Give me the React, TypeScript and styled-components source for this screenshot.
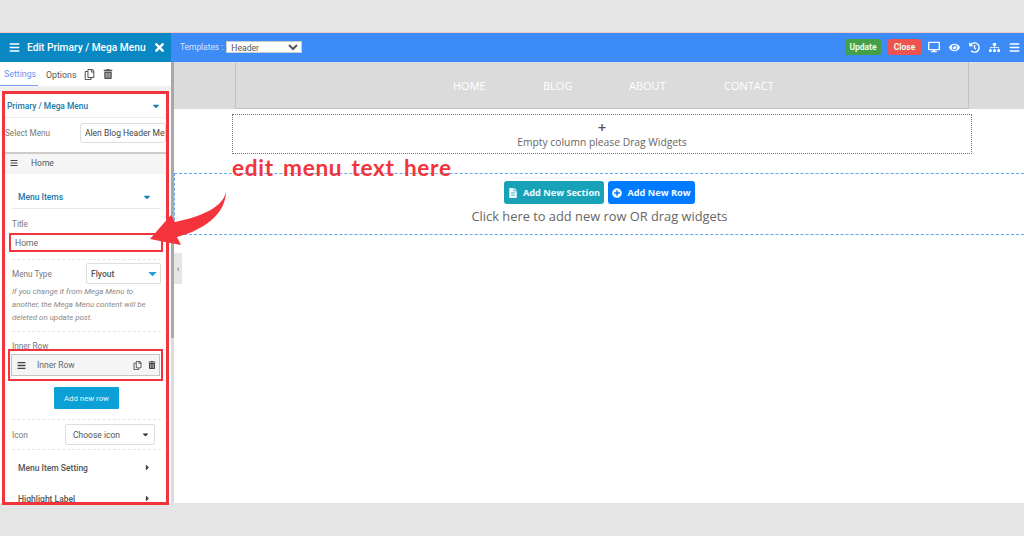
import React from "react";
import styled, { createGlobalStyle } from "styled-components";
import {
  FaBars, FaTimes, FaRegCopy, FaTrashAlt, FaDesktop, FaEye, FaHistory, FaSitemap, FaFileAlt, FaPlusCircle,
  FaCaretDown, FaCaretRight,
} from "react-icons/fa";

const Global = createGlobalStyle`
  html, body { margin: 0; padding: 0; background: #e5e5e5; }
  * { box-sizing: border-box; }
  body { font-family: Roboto, "Liberation Sans", sans-serif; }
`;

const Page = styled.div`
  width: 1024px; height: 536px; padding-top: 33px; background: #e5e5e5; overflow: hidden; position: relative;
`;
const Frame = styled.div`
  display: flex; height: 471px; background: #fff; border-top: 1px solid #f3c9c9;
  margin-top: -1px;
`;
const Sidebar = styled.aside`
  width: 171px; flex: none; display: flex; flex-direction: column; background: #fff;
`;
const SideHead = styled.header`
  height: 29px; flex: none; background: #0a88c4; color: #fff; display: flex; align-items: center;
  padding: 0 6px 0 9px; font-size: 10.2px; font-weight: 500; gap: 7px;
  white-space: nowrap;
  svg { flex: none; }
`;
const SideTitle = styled.span`flex: 1;`;
const Tabs = styled.div`
  height: 24px; flex: none; display: flex; align-items: center; font-size: 8.8px; color: #555; gap: 8px;
`;
const Tab = styled.span<{ $active?: boolean }>`
  height: 24px; display: flex; align-items: center; padding: 1px 0 0 ${p => (p.$active ? "4px" : "0")};
  width: ${p => (p.$active ? "38px" : "auto")};
  color: ${p => (p.$active ? "#6f93f5" : "#555")};
  border-bottom: ${p => (p.$active ? "1px solid #7fa2f5" : "none")};
`;
const TabIcon = styled.span`
  display: flex; color: #555;
`;
const TabGap = styled.div`height: 5px; flex: none; background: #f0f0f0;`;
const Panel = styled.section`
  margin-left: 2px; width: 167px; height: 414px; flex: none; border: 3px solid #f2343c; overflow: hidden;
  background: #fff; position: relative; z-index: 2;
`;
const PanelHead = styled.div`
  height: 24px; display: flex; align-items: center; justify-content: space-between; padding: 0 5px 0 2px;
  color: #2177a8; font-size: 8.4px; font-weight: 500; border-bottom: 1px solid #eee;
  svg { color: #1a78b5; }
`;
const SelectRow = styled.div`
  height: 29px; padding-top: 1px; display: flex; align-items: center; justify-content: space-between; font-size: 8.2px; color: #777;
  margin-bottom: 5px;
`;
const MenuInput = styled.input`
  width: 86px; height: 20px; border: 1px solid #ddd; border-radius: 3px; outline: 0;
  font: 8.5px Roboto, sans-serif; color: #444; padding: 0 0 0 4px; background: #fff;
`;
const ItemHead = styled.div`
  height: 22px; display: flex; align-items: center; gap: 13px; padding: 0 0 3px 5px; background: #f5f5f5;
  border-top: 2px solid #ccc; font-size: 8.5px; color: #555;
  svg { color: #444; }
`;
const Body = styled.div`
  padding: 11px 0 0 7px; width: 156px;
`;
const Collapse = styled.div`
  height: 24px; display: flex; align-items: center; justify-content: space-between; padding: 0 9px 0 6px;
  font-size: 8.5px; font-weight: 500; color: #2177a8; border-bottom: 1px solid #e8e8e8;
  svg { color: #1a78b5; }
`;
const Label = styled.div`
  height: 12px; line-height: 12px; font-size: 8.2px; color: #777; margin-top: 9px;
`;
const TitleInput = styled.div`
  margin: 3px -2px 0 -3px; height: 19px; border: 2px solid #f2343c; font-size: 8.6px; color: #666;
  display: flex; align-items: center; padding-left: 4px;
`;
const Dash = styled.div<{ $mt: number }>`
  border-top: 1px dashed #e6e6e6; margin-top: ${p => p.$mt}px;
`;
const FieldRow = styled.div<{ $mt: number }>`
  height: 21px; display: flex; align-items: center; justify-content: space-between; font-size: 8.2px; color: #777;
  margin-top: ${p => p.$mt}px;
`;
const Dropdown = styled.div`
  width: 75px; height: 21px; border: 1px solid #ddd; border-radius: 2px; display: flex; align-items: center;
  justify-content: space-between; padding: 0 1px 0 4px; font-size: 8.5px; font-weight: 500; color: #555;
  svg { color: #2b9be0; }
`;
const IconDropdown = styled(Dropdown)`
  width: 90px; margin-right: 6px; padding: 0 4px 0 7px; font-weight: 400; font-size: 8.5px;
  svg { color: #333; }
`;
const Help = styled.p`
  margin: 1px 0 0; font-size: 7.9px; line-height: 13px; font-style: italic; color: #8a8a8a; white-space: nowrap;
`;
const InnerLabel = styled(Label)`margin-top: 8px;`;
const RedBox = styled.div`
  margin: -3px -2px 0 -4px; height: 32px; border: 2px solid #f2343c; padding: 3px 1px;
`;
const InnerRow = styled.div`
  height: 22px; background: #f5f5f5; border: 1px solid #c4c4c4; display: flex; align-items: center;
  padding: 0 3px 0 5px; font-size: 8.5px; color: #666;
  svg { color: #444; flex: none; }
`;
const InnerName = styled.span`margin-left: 11px; flex: 1;`;
const InnerIcons = styled.span`display: flex; gap: 6px; align-items: center;`;
const Center = styled.div`display: flex; justify-content: center; margin-top: 6px;`;
const AddRow = styled.button`
  width: 65px; height: 22px; border: 0; border-radius: 1px; background: #0ca1d6; color: #e6f6fc; font: 400 7.8px Roboto, sans-serif; padding: 0;
`;
const Accordion = styled.div`
  height: 31px; display: flex; align-items: center; justify-content: space-between; padding: 0 9px 0 6px;
  font-size: 8.5px; font-weight: 500; color: #555;
  svg { color: #444; }
`;
const AccordionList = styled.div`margin-top: 2px;`;
const Track = styled.div`
  width: 3px; flex: none; background: #ddd; display: flex; flex-direction: column;
`;
const Thumb = styled.div`height: 305px; background: #a8a8a8;`;
const Main = styled.main`flex: 1; display: flex; flex-direction: column; min-width: 0; position: relative;`;
const TopBar = styled.div`
  height: 29px; flex: none; margin-left: -3px; background: #3d8bf7; display: flex; align-items: center; padding: 0 4px 1px 9px;
`;
const TemplateLabel = styled.label`font-size: 8.4px; color: #d4e5fd; margin-right: 3px; white-space: nowrap;`;
const TemplateSelect = styled.select`
  width: 76px; height: 12px; border: 1px solid #ccc; border-radius: 0; background: #fff; font: 8.6px Roboto, sans-serif; color: #555; padding: 0;
`;
const Spacer = styled.div`flex: 1;`;
const TopBtn = styled.button<{ $bg: string; $w: number; $ml: number }>`
  width: ${p => p.$w}px; height: 16px; border: 0; border-radius: 2px; background: ${p => p.$bg}; color: #eafbe9; padding: 0;
  margin-left: ${p => p.$ml}px; font: 700 8.5px Roboto, sans-serif;
`;
const TopIcons = styled.div`
  display: flex; align-items: center; gap: 9px; margin-left: 7px; color: #fff;
`;
const Band = styled.div`
  height: 47px; flex: none; background: #dbdbdb; padding: 0 55px 0 61px;
`;
const NavBox = styled.nav`
  height: 47px; border: 1px solid #c2c2c2; border-top: 0; position: relative; display: flex; align-items: center;
  padding-left: 217px; font: 11px "Open Sans", sans-serif; color: #fff;
`;
const NavItem = styled.span<{ $w: number }>`width: ${p => p.$w}px; flex: none;`;
const EmptyColumn = styled.div`
  margin: 5px 52px 0 58px; height: 40px; border: 1px dotted #777; display: flex; flex-direction: column; align-items: center;
  font: 10.3px "Open Sans", sans-serif; color: #666; padding-top: 5px;
`;
const Plus = styled.span`font-size: 15px; line-height: 15px; font-weight: 600; color: #555;`;
const EmptyText = styled.span`line-height: 15px;`;
const Section = styled.div`
  margin-top: 19px; height: 62px; border-top: 1px dashed #62a8ee; border-bottom: 1px dashed #62a8ee; border-left: 1px dashed #62a8ee;
  display: flex; flex-direction: column; align-items: center; padding-top: 7px;
`;
const BtnRow = styled.div`display: flex; gap: 4px;`;
const SectionBtn = styled.button<{ $bg: string; $w: number }>`
  width: ${p => p.$w}px; height: 23px; border: 0; border-radius: 3px; background: ${p => p.$bg}; color: #f1fbff;
  display: flex; align-items: center; justify-content: center; gap: 5px; padding: 0;
  font: 700 9.2px "Open Sans", sans-serif;
`;
const Hint = styled.div`
  font: 12.85px "Open Sans", sans-serif; color: #666; margin-top: 2px; line-height: 20px;
`;
const Handle = styled.div`
  position: absolute; left: 0; top: 220px; width: 8px; height: 31px; background: #e6e6e6; color: #666;
  font-size: 9px; display: flex; align-items: center; justify-content: center;
`;
const Note = styled.div`
  position: absolute; left: 232px; top: 154px; z-index: 4; white-space: nowrap; color: #f4343c;
  font: 700 22.6px/28px "Comic Sans MS", "Lato", "DejaVu Sans", sans-serif; letter-spacing: 0.7px; word-spacing: 3px;
`;
const Arrow = styled.svg`
  position: absolute; left: 0; top: 0; z-index: 4; pointer-events: none;
`;

export default function App() {
  return (
    <Page>
      <Global />
      <Frame>
        <Sidebar>
          <SideHead>
            <FaBars size={11} />
            <SideTitle>Edit Primary / Mega Menu</SideTitle>
            <FaTimes size={13} />
          </SideHead>
          <Tabs>
            <Tab $active>Settings</Tab>
            <Tab>Options</Tab>
            <TabIcon><FaRegCopy size={11} /></TabIcon>
            <TabIcon><FaTrashAlt size={10} /></TabIcon>
          </Tabs>
          <TabGap />
          <Panel>
            <PanelHead>Primary / Mega Menu <FaCaretDown size={10} /></PanelHead>
            <SelectRow>
              Select Menu
              <MenuInput readOnly value="Alen Blog Header Menu" />
            </SelectRow>
            <ItemHead><FaBars size={8} /> Home</ItemHead>
            <Body>
              <Collapse>Menu Items <FaCaretDown size={10} /></Collapse>
              <Label>Title</Label>
              <TitleInput>Home</TitleInput>
              <Dash $mt={7} />
              <FieldRow $mt={3}>
                Menu Type
                <Dropdown>Flyout <FaCaretDown size={13} /></Dropdown>
              </FieldRow>
              <Help>
                If you change it from Mega Menu to<br />
                another, the Mega Menu content will be<br />
                deleted on update post.
              </Help>
              <Dash $mt={7} />
              <InnerLabel>Inner Row</InnerLabel>
              <RedBox>
                <InnerRow>
                  <FaBars size={9} />
                  <InnerName>Inner Row</InnerName>
                  <InnerIcons><FaRegCopy size={9} /><FaTrashAlt size={8} /></InnerIcons>
                </InnerRow>
              </RedBox>
              <Center><AddRow>Add new row</AddRow></Center>
              <Dash $mt={10} />
              <FieldRow $mt={4}>
                Icon
                <IconDropdown>Choose icon <FaCaretDown size={9} /></IconDropdown>
              </FieldRow>
              <Dash $mt={4} />
              <AccordionList>
                <Accordion>Menu Item Setting <FaCaretRight size={9} /></Accordion>
                <Accordion>Highlight Label <FaCaretRight size={9} /></Accordion>
              </AccordionList>
            </Body>
          </Panel>
        </Sidebar>
        <Track><Thumb /></Track>
        <Main>
          <TopBar>
            <TemplateLabel>Templates :</TemplateLabel>
            <TemplateSelect defaultValue="h"><option value="h">Header</option></TemplateSelect>
            <Spacer />
            <TopBtn $bg="#43a047" $w={36} $ml={0}>Update</TopBtn>
            <TopBtn $bg="#ef5350" $w={33} $ml={7}>Close</TopBtn>
            <TopIcons>
              <FaDesktop size={12} />
              <FaEye size={11} />
              <FaHistory size={11} />
              <FaSitemap size={11} />
              <FaBars size={11} />
            </TopIcons>
          </TopBar>
          <Band>
            <NavBox>
              <NavItem $w={90}>HOME</NavItem>
              <NavItem $w={86}>BLOG</NavItem>
              <NavItem $w={95}>ABOUT</NavItem>
              <NavItem $w={60}>CONTACT</NavItem>
            </NavBox>
          </Band>
          <EmptyColumn>
            <Plus>+</Plus>
            <EmptyText>Empty column please Drag Widgets</EmptyText>
          </EmptyColumn>
          <Section>
            <BtnRow>
              <SectionBtn $bg="#17a2b8" $w={100}><FaFileAlt size={10} /> Add New Section</SectionBtn>
              <SectionBtn $bg="#007bff" $w={87}><FaPlusCircle size={10} /> Add New Row</SectionBtn>
            </BtnRow>
            <Hint>Click here to add new row OR drag widgets</Hint>
          </Section>
          <Handle>‹</Handle>
        </Main>
      </Frame>
      <Note>edit menu text here</Note>
      <Arrow width="1024" height="536" viewBox="0 0 1024 536">
        <path
          d="M226 191 C224 206 204 216 175 222 L171 215 L150 239 L181 245 L177 237 C204 230 226 214 226 191 Z"
          fill="#f4343c"
        />
      </Arrow>
    </Page>
  );
}
